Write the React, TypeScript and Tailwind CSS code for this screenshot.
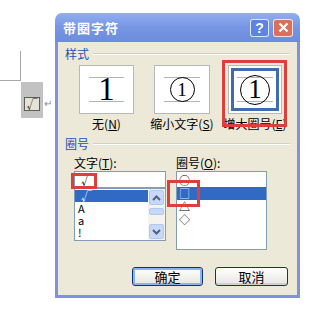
const cjk = { fontFamily: '"Noto Sans CJK SC", "Noto Sans", sans-serif' };

function GroupTitle({ text }: { text: string }) {
  return (
    <div className="flex items-center gap-[4px] pl-[7px] pr-[7px]">
      <span className="text-[12px] leading-[13px] text-[#1B4FC4]">{text}</span>
      <div className="flex-1 flex flex-col">
        <div className="h-px bg-[#D3D0C0]" />
        <div className="h-px bg-white" />
      </div>
    </div>
  );
}

function Guides({ children, inset }: { children: React.ReactNode; inset: string }) {
  return (
    <div className={`${inset} h-[25px] border-y border-[#B4B4B4] flex items-center justify-center`}>
      {children}
    </div>
  );
}

function Chevron({ up }: { up?: boolean }) {
  return (
    <svg width="9" height="6" viewBox="0 0 9 6">
      <path
        d={up ? "M1 5 L4.5 1.5 L8 5" : "M1 1 L4.5 4.5 L8 1"}
        fill="none"
        stroke="#4D6185"
        strokeWidth="2"
      />
    </svg>
  );
}

function Button({ label, isDefault, w }: { label: string; isDefault?: boolean; w: string }) {
  return (
    <div
      className={`${w} h-[19px] rounded-[3px] border border-[#003C74] bg-gradient-to-b from-white to-[#E6E5DE] flex items-center justify-center text-[13px] leading-none text-black ${
        isDefault ? "shadow-[inset_0_0_0_2px_#8EB2EF]" : "shadow-[inset_0_-2px_0_#D6D0C5]"
      }`}
    >
      {label}
    </div>
  );
}

export default function App() {
  return (
    <div className="relative w-[321px] h-[313px] bg-white flex overflow-hidden" style={cjk}>
      {/* document side */}
      <div className="w-[55px] shrink-0 flex flex-col">
        <div className="mt-[51px] w-[21px] h-[30px] border-r border-b border-[#A8A8A8]" />
        <div className="flex items-start mt-[1px] ml-[21px]">
          <div className="w-[22px] h-[36px] bg-[#C2C2C2] pt-[15px] pl-[3px]">
            <div className="w-[16px] h-[14px] border border-[#5C5C5C] bg-[#E4E3D6] flex items-center justify-center text-[11px] leading-none text-[#222]">
              √
            </div>
          </div>
          <span className="mt-[16px] ml-[1px] text-[10px] leading-none text-[#8A8A8A]">↵</span>
        </div>
      </div>

      {/* dialog */}
      <div className="mt-[13px] w-[245px] h-[285px] flex flex-col">
        <div className="h-[29px] rounded-t-[7px] bg-gradient-to-b from-[#93AEF0] via-[#7695E3] to-[#6D8CDD] flex items-center pl-[8px] pr-[7px]">
          <span className="text-[13px] font-bold text-white tracking-[1px]">带圈字符</span>
          <div className="ml-auto flex gap-[4px]">
            <div className="w-[19px] h-[18px] rounded-[3px] border border-white/80 bg-[#5B84E4] flex items-center justify-center text-white font-bold text-[14px] leading-none" style={{ fontFamily: '"Liberation Sans", sans-serif' }}>
              ?
            </div>
            <div className="w-[20px] h-[18px] rounded-[3px] border border-white/80 bg-[#D8705C] flex items-center justify-center">
              <svg width="11" height="11" viewBox="0 0 11 11">
                <path d="M1.5 1.5 L9.5 9.5 M9.5 1.5 L1.5 9.5" stroke="white" strokeWidth="2.2" />
              </svg>
            </div>
          </div>
        </div>

        <div className="flex-1 bg-[#ECE9D8] border-x-[3px] border-b-[3px] border-[#7F92DA] flex flex-col pt-[5px]">
          <GroupTitle text="样式" />

          <div className="mt-[5px] pl-[21px] flex">
            <div className="w-[55px] flex flex-col items-center">
              <div className="w-full h-[49px] bg-white border border-[#B8B8B8] pt-[11px]">
                <Guides inset="mx-[9px]">
                  <span className="text-[33px] leading-none text-black" style={{ fontFamily: '"Liberation Serif", serif' }}>
                    1
                  </span>
                </Guides>
              </div>
              <span className="mt-[3px] whitespace-nowrap text-[12px] leading-[13px]">
                无(<u>N</u>)
              </span>
            </div>
            <div className="ml-[20px] w-[56px] flex flex-col items-center">
              <div className="w-full h-[49px] bg-white border border-[#B8B8B8] pt-[11px]">
                <Guides inset="mx-[9px]">
                  <div className="w-[25px] h-[25px] rounded-full border-[1.5px] border-black flex items-center justify-center text-[19px] leading-none" style={{ fontFamily: '"Liberation Serif", serif' }}>
                    1
                  </div>
                </Guides>
              </div>
              <span className="mt-[3px] whitespace-nowrap text-[12px] leading-[13px]">
                缩小文字(<u>S</u>)
              </span>
            </div>
            <div className="ml-[18px] w-[54px] flex flex-col items-center">
              <div className="w-full h-[49px] bg-white border border-[#B8B8B8] p-[2px]">
                <div className="h-full border-[3px] border-[#3F6CAE] pt-[6px]">
                  <Guides inset="mx-[3px]">
                    <div className="w-[30px] h-[30px] rounded-full border-[1.5px] border-black flex items-center justify-center text-[27px] leading-none" style={{ fontFamily: '"Liberation Serif", serif' }}>
                      1
                    </div>
                  </Guides>
                </div>
              </div>
              <span className="mt-[3px] whitespace-nowrap text-[12px] leading-[13px]">
                增大圈号(<u>E</u>)
              </span>
            </div>
          </div>

          <div className="mt-[7px]">
            <GroupTitle text="圈号" />
          </div>

          <div className="mt-[6px] pl-[16px] flex gap-[10px]">
            <div className="w-[92px] flex flex-col">
              <span className="text-[12px] leading-[13px]">
                文字(<u>T</u>):
              </span>
              <div className="mt-[2px] h-[17px] bg-white border border-[#7F9DB9] pl-[6px] flex items-center text-[12px] leading-none">
                √
              </div>
              <div className="h-[53px] bg-white border border-[#7F9DB9] flex">
                <div className="flex-1 flex flex-col pt-[1px] text-[11px] leading-[12px]">
                  <div className="h-[12px] bg-[#316AC5] text-white pl-[6px]">√</div>
                  <div className="h-[12px] pl-[3px]">A</div>
                  <div className="h-[12px] pl-[3px]">a</div>
                  <div className="h-[12px] pl-[3px]">!</div>
                </div>
                <div className="w-[17px] bg-[#F4F3EE] flex flex-col p-[1px]">
                  <div className="h-[15px] rounded-[2px] bg-[#C8D8FA] border border-[#B3C7EE] flex items-center justify-center">
                    <Chevron up />
                  </div>
                  <div className="mt-[3px] h-[7px] rounded-[2px] bg-[#C8D8FA] border border-[#B3C7EE]" />
                  <div className="flex-1" />
                  <div className="h-[15px] rounded-[2px] bg-[#C8D8FA] border border-[#B3C7EE] flex items-center justify-center">
                    <Chevron />
                  </div>
                </div>
              </div>
            </div>

            <div className="w-[91px] flex flex-col">
              <span className="text-[12px] leading-[13px]">
                圈号(<u>O</u>):
              </span>
              <div className="mt-[2px] h-[79px] bg-white border border-[#7F9DB9] flex flex-col overflow-hidden pt-[2px] text-[11px]">
                <div className="h-[13px] pl-[2px] flex items-center leading-none">○</div>
                <div className="h-[13px] bg-[#316AC5] pl-[2px] flex items-center leading-none text-[#DCE6F8]">□</div>
                <div className="h-[13px] pl-[2px] flex items-center leading-none">△</div>
                <div className="h-[13px] pl-[2px] flex items-center leading-none">◇</div>
              </div>
            </div>
          </div>

          <div className="mt-auto pb-[9px] pr-[9px] flex justify-end gap-[12px]">
            <Button label="确定" isDefault w="w-[71px]" />
            <Button label="取消" w="w-[73px]" />
          </div>
        </div>
      </div>

      {/* red annotation boxes */}
      <div className="absolute left-[222px] top-[60px] w-[65px] h-[67px] border-[3px] border-[#DF3F3A]" />
      <div className="absolute left-[71px] top-[173px] w-[26px] h-[16px] border-[3px] border-[#DF3F3A]" />
      <div className="absolute left-[167px] top-[180px] w-[33px] h-[27px] border-[3px] border-[#DF3F3A]" />
    </div>
  );
}
